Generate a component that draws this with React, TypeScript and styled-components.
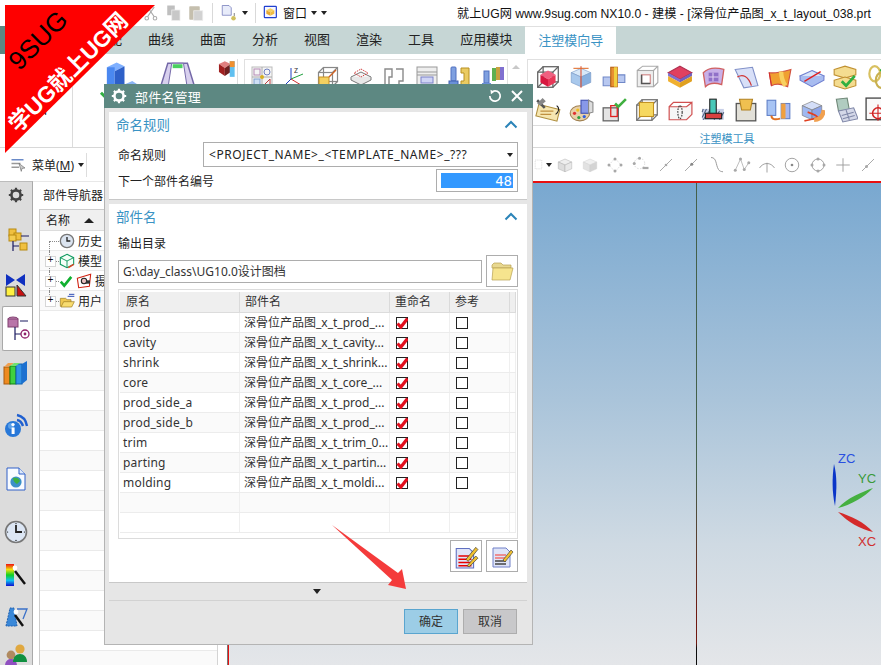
import React from "react";
import styled, { createGlobalStyle } from "styled-components";

const Global = createGlobalStyle`
  html, body { margin: 0; padding: 0; background: #fff; }
  body { font-family: "Noto Sans", "Noto Sans CJK SC", sans-serif; font-size: 12px; color: #222; }
`;

const Page = styled.div`
  position: relative; width: 881px; height: 665px; overflow: hidden;
  display: flex; flex-direction: column; background: #fff;
`;

/* ---------- title bar ---------- */
const TitleBar = styled.div`
  height: 26px; flex: none; display: flex; align-items: center; position: relative; white-space: nowrap;
`;
const QuickTools = styled.div`
  display: flex; align-items: center; height: 26px; width: 457px; padding-left: 143px; box-sizing: border-box; flex: none; gap: 4px;
`;
const QuickSep = styled.span`
  width: 1px; height: 20px; background: #d9d9d9; margin: 0 3px;
`;
const QuickLabel = styled.span`
  font-size: 12px; color: #111;
`;
const Caret = styled.span<{ $c?: string; $s?: number }>`
  width: 0; height: 0; border-left: ${p => (p.$s ?? 7) / 2}px solid transparent; border-right: ${p => (p.$s ?? 7) / 2}px solid transparent;
  border-top: ${p => ((p.$s ?? 7) * 4) / 7}px solid ${p => p.$c || "#222"}; display: inline-block; flex: none;
`;
const TitleText = styled.div`
  font-family: "Liberation Sans", "Noto Sans CJK SC", sans-serif; font-size: 12.2px; color: #111; white-space: nowrap;
`;

/* ---------- tabs ---------- */
const TabBar = styled.div`
  height: 28px; flex: none; display: flex; background: #c6d6d5; padding-left: 31px;
`;
const FileTab = styled.div`
  width: 30px; margin-left: -31px; margin-right: 1px; background: #5d8882;
`;
const Tab = styled.div<{ $on?: boolean }>`
  padding: 0 13px; font-size: 13px; line-height: 27px; white-space: nowrap;
  height: 28px; box-sizing: border-box;
  color: ${p => (p.$on ? "#3a93c4" : "#222")};
  background: ${p => (p.$on ? "#fff" : "transparent")};
  border-top: ${p => (p.$on ? "1px solid #e0e0e0" : "none")};
`;

/* ---------- ribbon ---------- */
const Ribbon = styled.div`
  height: 93px; flex: none; display: flex; background: #fff; border-bottom: 1px solid #d8d8d8; box-sizing: content-box; overflow: hidden;
`;
const RibbonLeft = styled.div<{ $w: number }>`
  width: ${p => p.$w}px; flex: none; height: 89px; margin-top: 5px; border-right: 1px solid #dcdcdc; box-sizing: border-box;
  display: flex; flex-direction: column; align-items: center; justify-content: flex-end; padding-bottom: 30px; font-size: 12px;
`;
const BigIcons = styled.div`
  width: 165px; height: 89px; margin-top: 5px; flex: none; border-right: 1px solid #dcdcdc; box-sizing: border-box; display: flex; padding-left: 26px; gap: 20px; align-items: flex-start;
`;
const Group = styled.div<{ $w: number; $l: number }>`
  width: ${p => p.$w}px; margin-left: ${p => p.$l}px; flex: none; height: 88px; margin-top: 5px; box-sizing: border-box;
  border: 1px solid #e0e0e0; border-bottom: none; display: flex; flex-direction: column;
`;
const IconGrid = styled.div<{ $n: number; $pad: number }>`
  display: grid; grid-template-columns: repeat(${p => p.$n}, 33.1px); grid-auto-rows: 33px; padding-left: ${p => p.$pad}px; flex: none; height: 65px;
`;
const IconCell = styled.div`
  display: flex; align-items: center; justify-content: center;
`;
const GroupLabel = styled.div`
  height: 23px; border-top: 1px solid #dcdcdc; text-align: center; color: #3a93c4; font-size: 11px; line-height: 26px; padding-left: 42px;
`;
const ScrollUp = styled.div`
  width: 0; height: 0; margin: 11px 0 0 4px; border-left: 4px solid transparent; border-right: 4px solid transparent; border-bottom: 4px solid #c8c8c8; flex: none;
`;

/* ---------- selection toolbar ---------- */
const Toolbar = styled.div`
  height: 33px; flex: none; display: flex; align-items: center; background: #fff; position: relative;
`;
const MenuButton = styled.div`
  display: flex; align-items: center; gap: 4px; padding-left: 10px; width: 87px; box-sizing: border-box; border-right: 1px solid #ddd; height: 24px; font-size: 12px; flex: none;
`;
const ToolRun = styled.div`
  margin-left: auto; display: flex; align-items: center; width: 348px; flex: none;
`;
const ToolCell = styled.span`
  width: 25.3px; display: flex; justify-content: center; align-items: center; flex: none;
`;

/* ---------- main area ---------- */
const Main = styled.div`
  flex: 1; display: flex; min-height: 0;
`;
const Rail = styled.div`
  width: 33px; flex: none; background: #dcdcdc; border-right: 1px solid #a9a9a9; box-sizing: border-box; display: flex; flex-direction: column; overflow: hidden; border-top: 1px solid #bcbcbc;
`;
const RailItem = styled.div<{ $h: number; $gap: number; $on?: boolean }>`
  height: ${p => p.$h}px; margin-top: ${p => p.$gap}px; flex: none; display: flex; align-items: center; justify-content: center;
  ${p => p.$on && `background:#fff; border:1px solid #a9a9a9; border-right:none; margin-left:2px; margin-right:-1px; border-radius:2px 0 0 2px; box-sizing:border-box; position:relative;`}
`;
const NavPanel = styled.div`
  width: 195px; flex: none; background: #fff; border-right: 1px solid #777; box-sizing: border-box; padding: 0 9px 0 6px; display: flex; flex-direction: column;
  border-top: 1px solid #e8e8e8;
`;
const NavTitle = styled.div`
  height: 27px; line-height: 27px; padding-left: 4px; font-size: 12px; flex: none;
`;
const NavTable = styled.div`
  flex: 1; border-left: 1px solid #ccc; border-right: 1px solid #d4d4d4; border-top: 1px solid #ccc; overflow: hidden;
`;
const NavHead = styled.div`
  height: 20px; background: #f0f0f0; display: flex; align-items: center; padding-left: 6px; gap: 14px; font-size: 12px; border-bottom: 1px solid #dcdcdc; white-space: nowrap;
`;
const HeadSort = styled.span`
  width: 0; height: 0; border-left: 5px solid transparent; border-right: 5px solid transparent; border-bottom: 5px solid #222;
`;
const NavRow = styled.div<{ $alt: boolean }>`
  height: 19px; border-bottom: 1px solid #eaeaea; background: ${p => (p.$alt ? "#fafafa" : "#fff")};
  display: flex; align-items: center; position: relative; white-space: nowrap; font-size: 12px;
  padding-left: 19px; gap: 3px;
`;
const Guide = styled.span<{ $first?: boolean; $last?: boolean }>`
  position: absolute; left: 9px; top: ${p => (p.$first ? 10 : 0)}px; height: ${p => (p.$first || p.$last ? 10 : 20)}px; width: 9px;
  border-left: 1px dotted #8a8a8a;
  &::after { content: ""; position: absolute; left: 0; right: 0; top: ${p => (p.$first ? 0 : 10)}px; border-top: 1px dotted #8a8a8a; }
`;
const Expander = styled.span`
  position: absolute; left: 5px; top: 5px; width: 9px; height: 9px; border: 1px solid #d6d6d6; background: #fff; font-size: 10px; line-height: 8px; text-align: center; color: #111; font-family: "Liberation Mono", monospace;
`;
const Viewport = styled.div`
  flex: 1; position: relative; border-top: 2px solid #e81010; border-left: 1px solid #e81010; background: linear-gradient(180deg, #79a8d0 0%, #aac4da 45%, #cfdae3 75%, #e4e6e9 100%);
`;
const CentreLine = styled.div`
  position: absolute; left: 467px; top: 0; bottom: 0; width: 1px; background: linear-gradient(180deg, #44604a 0%, #44604a 60%, #701810 90%, #701810 95.5%, #0c0c0c 96.5%);
`;
const Triad = styled.svg`
  position: absolute; left: 594px; top: 263px;
`;
const TriadText = styled.text`
  font-family: "Liberation Sans", sans-serif; font-size: 13px;
`;

/* ---------- dialog ---------- */
const Dialog = styled.div`
  position: absolute; left: 104px; top: 84px; width: 429px; height: 561px; background: #e6e6e6; border: 1px solid #b4b4b4; border-top: none; box-sizing: border-box;
  display: flex; flex-direction: column;
`;
const DialogHead = styled.div`
  height: 24px; flex: none; margin: 0 -1px; background: #5d8882; color: #fff; display: flex; align-items: center; padding: 0 9px 0 7px; font-size: 13px; gap: 8px;
`;
const DialogName = styled.span`
  flex: 1; letter-spacing: 0.2px;
`;
const Panel = styled.div<{ $h: number }>`
  height: ${p => p.$h}px; flex: none; margin: 4px 5px 0 4px; background: #fff; border-bottom: 1px solid #c8c8c8; box-sizing: border-box; padding: 0 9px; position: relative;
`;
const PanelHead = styled.div`
  height: 24px; margin: 0 0 6px -2px; display: flex; align-items: center; justify-content: space-between; color: #3a93c4; font-size: 13.5px;
`;
const FieldRow = styled.div<{ $gap?: number }>`
  display: flex; align-items: center; justify-content: space-between; font-size: 12px; margin-top: ${p => p.$gap ?? 0}px;
`;
const Select = styled.div`
  width: 315px; height: 25px; box-sizing: border-box; border: 1px solid #adadad; display: flex; align-items: center; justify-content: space-between; padding: 0 4px 0 5px; font-size: 12px; letter-spacing: 0.56px; white-space: nowrap;
`;
const NumberBox = styled.div`
  width: 82px; height: 23px; box-sizing: border-box; border: 1px solid #adadad; padding: 3px 4px;
`;
const NumberFill = styled.div`
  height: 100%; background: #3399ff; color: #fff; text-align: right; font-size: 14px; line-height: 16px; font-family: "DejaVu Sans Mono", monospace; font-weight: 300; padding-right: 1px;
`;
const Label = styled.div`
  font-size: 12px; height: 20px; line-height: 20px; margin: 3px 0 6px;
`;
const PathRow = styled.div`
  display: flex; align-items: center; gap: 4px; margin-top: -5px;
`;
const PathInput = styled.div`
  width: 364px; height: 23px; box-sizing: border-box; border: 1px solid #adadad; padding-left: 4px; line-height: 21px; font-size: 12px; color: #333; white-space: nowrap;
`;
const IconButton = styled.div`
  width: 32px; height: 32px; box-sizing: border-box; border: 1px solid #adadad; display: flex; align-items: center; justify-content: center; background: #fff; flex: none;
`;
const Table = styled.div`
  width: 400px; height: 250px; box-sizing: border-box; border: 1px solid #dcdcdc; padding: 2px 1px 1px; margin-top: 2px; overflow: hidden;
`;
const TableRow = styled.div<{ $alt?: boolean; $head?: boolean }>`
  display: grid; grid-template-columns: 120px 150px 60px 60px 1fr; height: ${p => (p.$head ? 21 : 20)}px; box-sizing: border-box;
  background: ${p => (p.$head ? "#efefef" : p.$alt ? "#fafafa" : "#fff")};
  border-bottom: 1px solid ${p => (p.$head ? "#dcdcdc" : "#ececec")};
`;
const Cell = styled.div<{ $head?: boolean; $pad?: number }>`
  border-right: 1px solid ${p => (p.$head ? "#dadada" : "#efefef")};
  padding-left: ${p => p.$pad ?? 4}px; line-height: 18px; font-size: 12px; white-space: nowrap; overflow: hidden; color: #333; display: flex; align-items: center;
`;
const OrigName = styled.span`
  letter-spacing: 0.2px;
`;
const Box = styled.span`
  width: 12px; height: 12px; box-sizing: border-box; border: 1px solid #222; display: block; background: #fff; flex: none; position: relative;
`;
const CheckMark = styled.svg`
  position: absolute; left: -1px; top: -1px;
`;
const ActionRow = styled.div`
  display: flex; justify-content: flex-end; gap: 4px; margin-top: 1px;
`;
const MoreBar = styled.div`
  height: 17px; flex: none; margin: 0 5px 0 4px; display: flex; justify-content: center; align-items: center; border-bottom: 1px solid #d2d2d2; padding-right: 2px;
`;
const DialogFoot = styled.div`
  display: flex; justify-content: flex-end; gap: 5px; padding: 8px 15px 0 0;
`;
const FootButton = styled.div<{ $primary?: boolean }>`
  width: 54px; height: 25px; box-sizing: border-box; text-align: center; line-height: 23px; font-size: 12px; color: #333;
  border: 1px solid ${p => (p.$primary ? "#5aa5cf" : "#adadad")};
  background: ${p => (p.$primary ? "#9ccde6" : "#c8c8ca")};
`;

/* ---------- overlays ---------- */
const Ribbonette = styled.div`
  position: absolute; left: 5px; top: 5px; width: 150px; height: 148px; background: #fe0000; clip-path: polygon(0 0, 100% 0, 0 100%);
`;
const Stamp = styled.div<{ $x: number; $y: number; $c: string; $s: number; $b?: boolean }>`
  position: absolute; left: ${p => p.$x}px; top: ${p => p.$y}px; color: ${p => p.$c}; font-size: ${p => p.$s}px; font-weight: ${p => (p.$b ? 700 : 400)};
  font-family: "Liberation Sans", "Noto Sans CJK SC", sans-serif; transform: translate(-50%, -50%) rotate(-45deg); white-space: nowrap; line-height: 1;
`;
const Pointer = styled.svg`
  position: absolute; left: 325px; top: 520px; pointer-events: none;
`;

/* ---------- icons ---------- */
type BoxProps = { t: string; l: string; r: string; s?: string };
const Iso = ({ t, l, r, s = "#7a7a7a" }: BoxProps) => (
  <g stroke={s} strokeWidth="0.6" strokeLinejoin="round">
    <polygon points="12,4 21,8 12,12 3,8" fill={t} />
    <polygon points="3,8 12,12 12,21 3,17" fill={l} />
    <polygon points="21,8 12,12 12,21 21,17" fill={r} />
  </g>
);
const Wire = ({ c = "#666" }: { c?: string }) => (
  <g fill="none" stroke={c} strokeWidth="1.2">
    <rect x="2.5" y="7.5" width="14" height="14" />
    <rect x="7.5" y="2.5" width="14" height="14" />
    <path d="M2.5 7.5l5-5M16.5 7.5l5-5M16.5 21.5l5-5M2.5 21.5l5-5" />
  </g>
);
const S = ({ children, w = 24 }: { children: React.ReactNode; w?: number }) => (
  <svg width={w} height={w} viewBox="0 0 24 24">{children}</svg>
);

const ribbonA: React.ReactNode[] = [
  <S><rect x="2" y="2" width="20" height="20" fill="#f5f5f5" stroke="#bbb" /><rect x="4" y="4" width="6" height="6" fill="none" stroke="#b58ab5" /><circle cx="17" cy="7" r="3" fill="none" stroke="#7080c0" /><rect x="4" y="14" width="6" height="6" fill="#cfe0f5" stroke="#80a0d0" /><path d="M14 20l6-6v6z" fill="none" stroke="#c04040" /><path d="M2 12h20M12 2v20" stroke="#aaa" /><circle cx="12" cy="12" r="2" fill="#d8b020" /></S>,
  <S><path d="M8 3v11l-5 5" stroke="#2040c0" fill="none" /><path d="M8 14l12-5" stroke="#20a040" fill="none" /><path d="M8 14l10 6" stroke="#d03030" fill="none" /><text x="11" y="8" fontSize="7" fill="#333">Z</text></S>,
  <S><Wire c="#888" /><rect x="3" y="12" width="10" height="9" fill="#f4d060" stroke="#c89020" /><path d="M13 12l7-7" stroke="#d06020" strokeWidth="1.5" /></S>,
  <S><polygon points="12,7 22,12 12,17 2,12" fill="#f5f5f5" stroke="#777" /><path d="M2 12v3l10 5 10-5v-3" fill="#e8e8e8" stroke="#777" /><polygon points="12,4 19,8 12,12 5,8" fill="none" stroke="#d04040" strokeDasharray="1.5 1" /></S>,
  <S><path d="M3 4h7v8h-3v9h-4zM14 4h7v12h-4v5h-3" fill="#fff" stroke="#8a8a8a" strokeWidth="1.4" /></S>,
  <S><rect x="2" y="2" width="20" height="20" fill="#eee" stroke="#999" /><path d="M2 7h20M2 10h20" stroke="#999" /><rect x="6" y="12" width="12" height="6" fill="#cfd4f5" stroke="#7a80c8" /></S>,
  <S><rect x="3" y="2" width="5" height="14" rx="1" fill="#7fa0e0" stroke="#5070c0" /><rect x="1" y="16" width="9" height="5" fill="#6a90d8" stroke="#4060b0" /><path d="M13 3h8v18h-8v-5h3v-8h-3z" fill="#eacb62" stroke="#b89020" /></S>,
  <S><rect x="3" y="6" width="5" height="12" fill="#7fa0e0" stroke="#5070c0" /><rect x="1" y="18" width="9" height="4" fill="#6a90d8" /><rect x="11" y="3" width="4" height="13" fill="#5fb050" /><rect x="15" y="2" width="4" height="13" fill="#c8a040" /><rect x="19" y="2" width="4" height="13" fill="#8070d0" /></S>,
];
const ribbonB: React.ReactNode[] = [
  <S w={26}><Wire /><polygon points="12,6 19,10 12,14 5,10" fill="#f06080" /><polygon points="5,10 12,14 12,21 5,17" fill="#d81840" /><polygon points="19,10 12,14 12,21 19,17" fill="#e83858" /></S>,
  <S w={26}><Iso t="#d8e8f8" l="#a8c8ec" r="#88b0e0" s="#7a9ac8" /><path d="M12 2v20" stroke="#e05030" /><path d="M5 4h14" stroke="#e07030" /></S>,
  <S w={26}><polygon points="2,12 9,12 9,20 2,20" fill="#b8c8f0" stroke="#7088c8" /><polygon points="15,10 22,10 22,17 15,17" fill="#b8c8f0" stroke="#7088c8" /><rect x="9" y="3" width="6" height="18" fill="#e89030" stroke="#b86010" /><rect x="12" y="3" width="3" height="18" fill="#f0d040" /></S>,
  <S w={26}><rect x="3" y="6" width="15" height="15" fill="#eee" stroke="#aaa" /><path d="M3 6l5-4h14v15l-4 4M18 6l4-4" fill="none" stroke="#aaa" /><rect x="7" y="10" width="8" height="8" fill="#fff" stroke="#d08080" /><path d="M7 10v8h8" fill="none" stroke="#555" strokeWidth="1.4" /></S>,
  <S w={26}><polygon points="12,2 23,8 12,14 1,8" fill="#e04060" stroke="#b03050" /><polygon points="1,8 12,14 12,17 1,11" fill="#8070d0" /><polygon points="23,8 12,14 12,17 23,11" fill="#7060c0" /><polygon points="1,11 12,17 12,22 1,16" fill="#f0b030" /><polygon points="23,11 12,17 12,22 23,16" fill="#e0a020" /></S>,
  <S w={26}><path d="M3 8c5-5 12-5 19-3l-2 14c-6-2-11-2-15 2z" fill="#c8b0e8" stroke="#d06060" strokeWidth="1.2" /><rect x="8" y="8" width="9" height="8" fill="#9070c8" /><path d="M12 8v8M8 12h9" stroke="#e0d0f0" /></S>,
  <S w={26}><polygon points="2,5 18,3 23,20 10,22" fill="#d8e0f8" stroke="#8090c8" /><path d="M4 12c5-3 10-1 13 8" fill="none" stroke="#d03838" strokeWidth="1.2" /></S>,
  <S w={26}><path d="M3 8c6 1 13-1 20-3l-3 16c-6-3-11-3-15-1z" fill="#f0a030" stroke="#d05040" /><path d="M3 8l2 12" stroke="#d03030" /><path d="M14 7c0 5 1 9 4 13" stroke="#f8d060" strokeWidth="4" fill="none" /></S>,
  <S w={26}><polygon points="12,6 23,11 12,17 1,11" fill="#d8e4fa" stroke="#7080d0" /><path d="M1 11v4l11 6 11-6v-4" fill="#a8bcf0" stroke="#7080d0" /><path d="M5 16l15-9" stroke="#e02020" strokeWidth="1.2" /></S>,
  <S w={26}><path d="M2 5l10-3 10 3v5l-10 3-10-3z" fill="#f4dc90" stroke="#c09030" /><path d="M2 15l10-3 10 3v5l-10 3-10-3z" fill="#f4dc90" stroke="#c09030" /><path d="M9 16l4 4 8-9" fill="none" stroke="#30b040" strokeWidth="2.6" /></S>,
  <S w={26}><ellipse cx="9" cy="9" rx="5" ry="7" fill="none" stroke="#d8c060" strokeWidth="2" /><ellipse cx="15" cy="15" rx="5" ry="7" fill="none" stroke="#c8b050" strokeWidth="2" /><path d="M14 5l4 4 6-7" fill="none" stroke="#30b040" strokeWidth="2" /></S>,
  <S w={26}><rect x="2" y="9" width="20" height="11" transform="rotate(14 12 14)" fill="#f6e6b0" stroke="#b09040" /><path d="M5 13h12M5 16h10" stroke="#c09040" /><path d="M2 3l7 7" stroke="#555" strokeWidth="2.4" /><path d="M2 6l5-5 3 3-5 4z" fill="#888" /><path d="M20 8c3 2 2 6-1 8" fill="none" stroke="#222" /></S>,
  <S w={26}><ellipse cx="11" cy="15" rx="9" ry="7" fill="#e8d0a8" stroke="#a08050" /><circle cx="6" cy="15" r="1.5" fill="#e03030" /><circle cx="10" cy="19" r="1.5" fill="#30a040" /><circle cx="15" cy="18" r="1.5" fill="#3060e0" /><circle cx="9" cy="12" r="1.5" fill="#f0c020" /><rect x="12" y="3" width="7" height="12" fill="#8898e8" stroke="#4050b0" /><polygon points="19,3 23,5 23,14 19,15" fill="#ddd" stroke="#888" /></S>,
  <S w={26}><rect x="2" y="10" width="14" height="12" fill="#e4e4e4" stroke="#666" strokeWidth="1.2" /><rect x="9" y="8" width="6" height="10" fill="none" stroke="#e02020" strokeWidth="1.2" /><path d="M13 6l3 3 7-7" fill="none" stroke="#40b040" strokeWidth="2.4" /></S>,
  <S w={26}><Wire c="#777" /><rect x="5" y="5" width="13" height="13" fill="#f6d860" stroke="#c09020" /></S>,
  <S w={26}><path d="M2 9h16l5-4v11l-5 5H2z" fill="#f6f6f6" stroke="#d05050" strokeWidth="1.1" /><path d="M2 9l4-4h17" fill="none" stroke="#d05050" strokeWidth="1.1" /><ellipse cx="12" cy="14" rx="2" ry="6" fill="none" stroke="#333" strokeDasharray="1.5 1" /></S>,
  <S w={26}><rect x="2" y="11" width="20" height="10" fill="#c8d0e8" /><path d="M3 11l-1 3M6 11l-4 8M10 11l-7 10M18 13l-5 8M22 14l-4 7" stroke="#506080" /><rect x="9" y="2" width="6" height="14" fill="#48c8b8" stroke="#222" /><rect x="5" y="15" width="15" height="5" fill="#d84040" stroke="#222" /></S>,
  <S w={26}><rect x="3" y="6" width="18" height="16" fill="#e2e0d8" stroke="#555" strokeWidth="1.2" /><polygon points="6,2 18,2 16,12 8,12" fill="#f0c050" stroke="#b08020" /></S>,
  <S w={26}><rect x="1" y="3" width="8" height="14" fill="#a8c4f4" stroke="#6080c8" /><rect x="14" y="6" width="8" height="14" fill="#a8b8f0" stroke="#6080c8" /><rect x="14" y="6" width="4" height="14" fill="#f0a040" /><path d="M5 17c0 4 4 4 8 3" fill="none" stroke="#e07020" strokeWidth="1.8" /></S>,
  <S w={26}><Iso t="#d4def8" l="#a0b8f0" r="#8ca4e8" /><path d="M8 14c3 1 9 3 9 5-4 2-8 2-12 3" stroke="#e04020" fill="none" strokeWidth="1.6" /><path d="M14 21c5 0 8-3 9-9" stroke="#f0a050" strokeWidth="4" fill="none" /></S>,
  <S w={26}><polygon points="4,2 14,1 16,12 6,13" fill="#b0ccc0" stroke="#708878" /><polygon points="6,13 20,10 24,20 10,23" fill="#d4d8e8" stroke="#8088a8" /><path d="M9 17l11-3M10 20l11-3M13 12l3 9" stroke="#8088a8" /></S>,
  <S w={26}><rect x="1" y="1" width="20" height="20" fill="#fafafa" stroke="#444" strokeWidth="1.2" /><circle cx="12" cy="15" r="5" fill="none" stroke="#d02020" strokeWidth="1.4" /><path d="M12 7v15M4 15h18" stroke="#d02020" /></S>,
];

const toolGlyph = (k: number) => {
  const g = "#a8a8a8";
  const list: React.ReactNode[] = [
    <S w={18}><Iso t="#eee" l="#ddd" r="#e8e8e8" s="#aaa" /></S>,
    <S w={18}><Iso t="#f0f0f0" l="#e2e2e2" r="#d4d4d4" s="#cfcfcf" /></S>,
    <S w={18}><path d="M12 3l8 9-8 9-8-9z" fill="none" stroke="#ccc" strokeDasharray="2 2" /><circle cx="12" cy="4" r="2" fill={g} /><circle cx="12" cy="20" r="2" fill={g} /><circle cx="4" cy="12" r="2" fill={g} /><circle cx="20" cy="12" r="2" fill={g} /></S>,
    <S w={18}><circle cx="10" cy="10" r="7" fill="none" stroke="#ccc" strokeDasharray="2 2" /><circle cx="10" cy="3" r="2" fill={g} /><circle cx="3" cy="10" r="2" fill={g} /><path d="M14 16h8" stroke={g} strokeWidth="3" /></S>,
    <S w={18}><path d="M4 20L20 4" stroke={g} strokeWidth="1.3" /><circle cx="12" cy="12" r="1.8" fill={g} /></S>,
    <S w={18}><path d="M4 20L20 4" stroke={g} strokeWidth="1.3" /><circle cx="13" cy="11" r="2" fill="#888" /></S>,
    <S w={18}><path d="M4 2c8 0 6 10 10 16 1 2 4 3 6 3" fill="none" stroke="#999" strokeWidth="1.3" /></S>,
    <S w={18}><path d="M3 19L10 4l5 14 6-9" fill="none" stroke={g} /><circle cx="10" cy="4" r="2" fill={g} /><circle cx="3" cy="19" r="2" fill={g} /><circle cx="15" cy="18" r="2" fill={g} /><circle cx="21" cy="9" r="2" fill={g} /></S>,
    <S w={18}><path d="M2 16c5-8 15-8 20 0M12 9v13" fill="none" stroke="#999" strokeWidth="1.2" /></S>,
    <S w={18}><circle cx="12" cy="12" r="9" fill="none" stroke="#999" strokeWidth="1.2" /><circle cx="12" cy="12" r="1.8" fill="#888" /></S>,
    <S w={18}><circle cx="12" cy="12" r="8" fill="none" stroke="#999" strokeWidth="1.2" /><circle cx="12" cy="4" r="2" fill={g} /><circle cx="4" cy="12" r="2" fill={g} /><circle cx="20" cy="12" r="2" fill={g} /><circle cx="12" cy="20" r="2" fill={g} /></S>,
    <S w={18}><path d="M12 3v18M3 12h18" stroke="#999" strokeWidth="1.2" /></S>,
    <S w={18}><path d="M4 20L20 4" stroke={g} strokeWidth="1.3" /><circle cx="10" cy="14" r="2" fill={g} /></S>,
  ];
  return list[k];
};

const PartCheck = () => (
  <CheckMark width="12" height="12" viewBox="0 0 12 12">
    <path d="M1.5 6.5l3.4 3.6L11.5 1.6" fill="none" stroke="#e3101e" strokeWidth="3.2" />
  </CheckMark>
);

const parts: [string, string][] = [
  ["prod", "深骨位产品图_x_t_prod_..."],
  ["cavity", "深骨位产品图_x_t_cavity..."],
  ["shrink", "深骨位产品图_x_t_shrink..."],
  ["core", "深骨位产品图_x_t_core_..."],
  ["prod_side_a", "深骨位产品图_x_t_prod_..."],
  ["prod_side_b", "深骨位产品图_x_t_prod_..."],
  ["trim", "深骨位产品图_x_t_trim_0..."],
  ["parting", "深骨位产品图_x_t_partin..."],
  ["molding", "深骨位产品图_x_t_moldi..."],
];

const Chevron = () => (
  <svg width="14" height="9" viewBox="0 0 14 9"><path d="M1.5 7.5L7 2l5.5 5.5" fill="none" stroke="#2b84b8" strokeWidth="2" /></svg>
);

const Gear = ({ c = "#fff", s = 16 }: { c?: string; s?: number }) => (
  <svg width={s} height={s} viewBox="0 0 16 16">
    <circle cx="8" cy="8" r="4.6" fill="none" stroke={c} strokeWidth="2.6" />
    <path d="M8 0.8v2.6M8 12.6v2.6M0.8 8h2.6M12.6 8h2.6M2.9 2.9l1.8 1.8M11.3 11.3l1.8 1.8M13.1 2.9l-1.8 1.8M4.7 11.3l-1.8 1.8" stroke={c} strokeWidth="2.2" />
  </svg>
);

const Folder = ({ s = 24 }: { s?: number }) => (
  <svg width={s} height={s} viewBox="0 0 24 24">
    <path d="M2 6l2-2h7l2 2h8v3H2z" fill="#e8d890" stroke="#b8a050" strokeWidth="0.7" />
    <path d="M3 9h20l-3 12H2z" fill="#f6e48e" stroke="#b8a050" strokeWidth="0.7" />
  </svg>
);

const railIcons: React.ReactNode[] = [
  <Gear c="#444" s={16} />,
  <svg width="30" height="30" viewBox="0 0 30 30"><rect x="8" y="3" width="7" height="7" fill="#f0c040" stroke="#b88a10" /><rect x="13" y="7" width="7" height="7" fill="#f0c040" stroke="#b88a10" /><rect x="8" y="9" width="7" height="6" fill="#f4cc50" stroke="#b88a10" /><path d="M12 15v10M12 20h6M20 10h8" stroke="#1a1a60" strokeWidth="1.2" /><rect x="19" y="17" width="7" height="7" fill="#f0c040" stroke="#b88a10" /></svg>,
  <svg width="24" height="26" viewBox="0 0 24 26"><path d="M2 1l9 6-9 6zM21 1l-9 6 9 6z" fill="#1030c0" /><rect x="2" y="14" width="9" height="9" fill="#fff040" stroke="#333" /><path d="M13 12v11h9z" fill="#c81010" stroke="#333" /></svg>,
  <svg width="24" height="30" viewBox="0 0 24 30"><ellipse cx="7" cy="5" rx="5" ry="2" fill="#c88ab8" stroke="#804070" /><rect x="2" y="5" width="10" height="8" fill="#b874a8" stroke="#804070" /><path d="M9 13v13M9 20h6M14 7h8" stroke="#1a1a60" strokeWidth="1.2" /><circle cx="19" cy="20" r="4" fill="none" stroke="#90206a" strokeWidth="1.3" /><circle cx="19" cy="20" r="1.4" fill="#90206a" /></svg>,
  <svg width="26" height="26" viewBox="0 0 26 26"><rect x="1" y="7" width="6" height="17" fill="#ee8a20" stroke="#a85a10" /><rect x="7" y="6" width="6" height="18" fill="#40d040" stroke="#108010" /><rect x="13" y="4" width="6" height="20" fill="#3090e8" stroke="#1060b0" /><polygon points="19,4 24,1 24,20 19,24" fill="#1c70d0" /><path d="M1 7l4-4h6l-4 3" fill="#f0a050" /><path d="M7 6l4-3h6l-4 3" fill="#70e070" /></svg>,
  <svg width="26" height="26" viewBox="0 0 26 26"><path d="M14 2c5 1 9 5 10 11M14 7c3 .5 5 3 6 6" fill="none" stroke="#2060d0" strokeWidth="2.4" /><circle cx="10" cy="16" r="8" fill="#2878d8" /><circle cx="8" cy="13" r="3" fill="#70b0f0" opacity=".7" /><rect x="8.6" y="14.5" width="3" height="6.5" fill="#fff" /><circle cx="10" cy="11.6" r="1.7" fill="#fff" /></svg>,
  <svg width="22" height="26" viewBox="0 0 22 26"><path d="M2 2h12l6 6v16H2z" fill="#f8fbff" stroke="#3060c8" /><path d="M14 2v6h6" fill="#dce8fa" stroke="#3060c8" /><circle cx="11" cy="16" r="5.6" fill="#3a90c8" /><path d="M8 12c3-1 6 0 7 3l-3 3c-2-1-4-3-4-6z" fill="#3cb040" /></svg>,
  <svg width="24" height="24" viewBox="0 0 24 24"><circle cx="12" cy="12" r="10.5" fill="#dce6f4" stroke="#777" strokeWidth="1.6" /><path d="M12 5v7h6" fill="none" stroke="#222" strokeWidth="1.8" /><circle cx="12" cy="3.6" r=".6" /><circle cx="12" cy="20.4" r=".6" /><circle cx="3.6" cy="12" r=".6" /><circle cx="20.4" cy="12" r=".6" /></svg>,
  <svg width="22" height="24" viewBox="0 0 22 24"><defs><linearGradient id="rb" x1="0" y1="0" x2="0" y2="1"><stop offset="0" stopColor="#f01010" /><stop offset=".25" stopColor="#f0e010" /><stop offset=".5" stopColor="#10d020" /><stop offset=".75" stopColor="#10c0f0" /><stop offset="1" stopColor="#1010d0" /></linearGradient></defs><rect x="1" y="1" width="8" height="22" fill="url(#rb)" /><path d="M10 8l10 13" stroke="#111" strokeWidth="2.4" /><circle cx="10" cy="5" r="2.4" fill="#fff" /></svg>,
  <svg width="24" height="24" viewBox="0 0 24 24"><path d="M2 20L6 2h4l3 18z" fill="#3a88d8" stroke="#2060b0" strokeDasharray="2 1" /><path d="M13 3h10l-4 10" fill="none" stroke="#3a70c8" strokeWidth="1.3" /><path d="M11 9l8 11" stroke="#111" strokeWidth="2.4" /><circle cx="12" cy="6" r="2.4" fill="#fff" /></svg>,
  <svg width="24" height="28" viewBox="0 0 24 28"><circle cx="7" cy="13" r="4.4" fill="#b08a60" /><path d="M1 24c0-5 3-7 6-7s6 2 6 7v4H1z" fill="#9050c0" /><circle cx="16" cy="7" r="4.6" fill="#e0a840" /><path d="M9 20c0-5 3-8 7-8s7 3 7 8z" fill="#109040" /></svg>,
];
const railGaps: [number, number][] = [[25, 0], [36, 16], [36, 9], [45, 2], [36, 4], [36, 17], [36, 17], [36, 17], [36, 7], [36, 7], [36, 2]];

const navItems: { e: boolean; ic: React.ReactNode; t: string }[] = [
  { e: false, ic: <S w={16}><circle cx="12" cy="12" r="10" fill="#dbe4f0" stroke="#777" strokeWidth="2" /><path d="M12 6v6h5" fill="none" stroke="#222" strokeWidth="2" /></S>, t: "历史" },
  { e: true, ic: <S w={16}><polygon points="12,2 22,7 22,17 12,22 2,17 2,7" fill="#f4fff8" stroke="#109a60" strokeWidth="1.6" /><path d="M2 7l10 5 10-5M12 12v10" fill="none" stroke="#109a60" strokeWidth="1.4" /><path d="M14 22l8-5" stroke="#e04020" strokeWidth="2" /></S>, t: "模型" },
  { e: true, ic: <><S w={14}><path d="M3 13l6 7L21 5" fill="none" stroke="#10b030" strokeWidth="4.5" /></S><S w={16}><polygon points="2,8 22,2 20,20 4,22" fill="#fff" stroke="#d02010" strokeWidth="1.6" /><circle cx="12" cy="12" r="4" fill="#e8c0c0" stroke="#222" strokeWidth="1.6" /><rect x="15" y="11" width="6" height="5" fill="#333" /></S></>, t: "摄" },
  { e: true, ic: <S w={16}><path d="M2 20V8h8l2 2h6v10z" fill="#f0c850" stroke="#9a7a20" /><path d="M3 21l4-8h16l-4 8z" fill="#f8dc70" stroke="#9a7a20" /><path d="M15 2h8M13 5h10" stroke="#2040b0" strokeWidth="1.4" /></S>, t: "用户" },
];

export default function App() {
  return (
    <Page>
      <Global />
      <TitleBar>
        <QuickTools>
          <S w={18}><path d="M6 4l9 13M15 4L6 17" stroke="#aaa" strokeWidth="1.6" /><circle cx="5" cy="19" r="2.4" fill="none" stroke="#aaa" strokeWidth="1.4" /><circle cx="16" cy="19" r="2.4" fill="none" stroke="#aaa" strokeWidth="1.4" /></S>
          <S w={18}><rect x="3" y="2" width="10" height="13" fill="#bfbfbf" /><rect x="9" y="8" width="11" height="14" fill="#c8c8c8" stroke="#eee" /></S>
          <S w={18}><rect x="3" y="3" width="14" height="18" rx="1" fill="#c5bfae" /><rect x="9" y="9" width="12" height="13" fill="#d2d2d2" stroke="#eee" /></S>
          <QuickSep />
          <S w={18}><path d="M3 2h9l3 3v10H3z" fill="#e8ecfa" stroke="#7078b8" /><circle cx="18" cy="19" r="3" fill="#d0c060" /><path d="M19 12v4" stroke="#555" /></S>
          <Caret />
          <QuickSep />
          <S w={16}><rect x="2" y="2" width="18" height="17" rx="1" fill="#f7f7ff" stroke="#2040d0" strokeWidth="1.8" /><polygon points="11,5 17,8 11,11 5,8" fill="#f4d060" /><polygon points="5,8 11,11 11,16 5,13" fill="#e8a830" /><polygon points="17,8 11,11 11,16 17,13" fill="#f0bc40" /></S>
          <QuickLabel>窗口</QuickLabel>
          <Caret />
          <Caret />
        </QuickTools>
        <TitleText>就上UG网 www.9sug.com NX10.0 - 建模 - [深骨位产品图_x_t_layout_038.prt</TitleText>
      </TitleBar>

      <TabBar>
        <FileTab />
        <Tab>主页</Tab>
        <Tab>装配</Tab>
        <Tab>曲线</Tab>
        <Tab>曲面</Tab>
        <Tab>分析</Tab>
        <Tab>视图</Tab>
        <Tab>渲染</Tab>
        <Tab>工具</Tab>
        <Tab>应用模块</Tab>
        <Tab $on>注塑模向导</Tab>
      </TabBar>

      <Ribbon>
        <RibbonLeft $w={73}>项目</RibbonLeft>
        <BigIcons>
          <svg width="40" height="46" viewBox="0 0 40 46"><polygon points="8,8 18,3 26,7 16,12" fill="#7fb0ff" /><rect x="8" y="8" width="8" height="24" fill="#4a88f0" /><polygon points="16,12 26,7 26,26 16,32" fill="#2e60c8" /><polygon points="20,28 34,22 40,26 26,33" fill="#8ab4f4" /><polygon points="26,33 40,26 40,34 26,42" fill="#3a70d8" /><path d="M2 34l6 6 10-11" fill="none" stroke="#30b040" strokeWidth="3" /></svg>
          <svg width="40" height="34" viewBox="0 0 40 34"><polygon points="10,4 30,4 38,30 2,30" fill="#d8d0ee" stroke="#7468a8" strokeWidth="1.5" /><polygon points="14,4 26,4 30,30 10,30" fill="#fff" stroke="#7468a8" /><rect x="15" y="5" width="10" height="4" fill="#4ad060" /></svg>
          <svg width="20" height="22" viewBox="0 0 20 22"><polygon points="2,5 8,2 14,5 8,9" fill="#e08080" /><polygon points="2,5 8,9 8,17 2,13" fill="#a02020" /><polygon points="14,5 8,9 8,17 14,13" fill="#702020" /><rect x="13" y="2" width="5" height="16" fill="#60c0f0" /><rect x="13" y="2" width="5" height="6" fill="#f09030" /></svg>
        </BigIcons>
        <Group $w={264} $l={6}>
          <IconGrid $n={8} $pad={0}>
            {ribbonA.map((n, i) => <IconCell key={i}>{n}</IconCell>)}
          </IconGrid>
        </Group>
        <ScrollUp />
        <Group $w={358} $l={7}>
          <IconGrid $n={11} $pad={3}>
            {ribbonB.map((n, i) => <IconCell key={i}>{n}</IconCell>)}
          </IconGrid>
          <GroupLabel>注塑模工具</GroupLabel>
        </Group>
      </Ribbon>

      <Toolbar>
        <MenuButton>
          <S w={18}><rect x="2" y="4" width="16" height="2" fill="#6a8ac8" /><rect x="2" y="9" width="12" height="2" fill="#999" /><rect x="2" y="14" width="10" height="2" fill="#999" /><path d="M12 10l8 6-4 .5-1 4z" fill="#ccc" stroke="#555" strokeWidth=".7" /></S>
          <span>菜单(<u>M</u>)</span>
          <Caret />
        </MenuButton>
        <ToolRun>
          <S w={14}><rect x="4" y="3" width="12" height="16" fill="none" stroke="#bbb" strokeDasharray="2 2" /></S>
          <Caret />
          {Array.from({ length: 13 }).map((_, i) => <ToolCell key={i}>{toolGlyph(i)}</ToolCell>)}
        </ToolRun>
      </Toolbar>

      <Main>
        <Rail>
          {railIcons.map((n, i) => (
            <RailItem key={i} $h={railGaps[i][0]} $gap={railGaps[i][1]} $on={i === 3}>{n}</RailItem>
          ))}
        </Rail>
        <NavPanel>
          <NavTitle>部件导航器</NavTitle>
          <NavTable>
            <NavHead><span>名称</span><HeadSort /></NavHead>
            {Array.from({ length: 22 }).map((_, i) => {
              const r = navItems[i];
              return (
                <NavRow key={i} $alt={i % 2 === 1}>
                  {r && <Guide $first={i === 0} $last={i === navItems.length - 1} />}
                  {r?.e && <Expander>+</Expander>}
                  {r?.ic}
                  {r && <span>{r.t}</span>}
                </NavRow>
              );
            })}
          </NavTable>
        </NavPanel>
        <Viewport>
          <CentreLine />
          <Triad width="60" height="105" viewBox="0 0 60 105">
            <path d="M11 18c3 12 3 24 1 42-3-14-3-28-1-42z" fill="#0a35c8" />
            <path d="M15 62c9-10 24-16 35-20-8 9-23 17-35 20z" fill="#45b040" />
            <path d="M15 66c13 4 26 10 35 20-13-3-25-10-35-20z" fill="#d42a2a" />
            <TriadText x="15" y="17" fill="#2a50e0">ZC</TriadText>
            <TriadText x="35" y="37" fill="#3a9a3a">YC</TriadText>
            <TriadText x="35" y="100" fill="#d03030">XC</TriadText>
          </Triad>
        </Viewport>
      </Main>

      <Dialog>
        <DialogHead>
          <Gear />
          <DialogName>部件名管理</DialogName>
          <svg width="14" height="14" viewBox="0 0 14 14"><path d="M5 2.2A5.2 5.2 0 1 1 1.8 7" fill="none" stroke="#fff" strokeWidth="1.7" /><path d="M2.5 0.8l.4 4.4 3.6-2.4z" fill="#fff" /></svg>
          <svg width="14" height="14" viewBox="0 0 14 14"><path d="M2 2l10 10M12 2L2 12" stroke="#fff" strokeWidth="2" /></svg>
        </DialogHead>
        <Panel $h={88}>
          <PanelHead>命名规则<Chevron /></PanelHead>
          <FieldRow>
            <span>命名规则</span>
            <Select>&lt;PROJECT_NAME&gt;_&lt;TEMPLATE_NAME&gt;_???<Caret /></Select>
          </FieldRow>
          <FieldRow $gap={2}>
            <span>下一个部件名编号</span>
            <NumberBox><NumberFill>48</NumberFill></NumberBox>
          </FieldRow>
        </Panel>
        <Panel $h={379}>
          <PanelHead>部件名<Chevron /></PanelHead>
          <Label>输出目录</Label>
          <PathRow>
            <PathInput>G:\day_class\UG10.0设计图档</PathInput>
            <IconButton><Folder /></IconButton>
          </PathRow>
          <Table>
            <TableRow $head>
              <Cell $head $pad={6}>原名</Cell>
              <Cell $head $pad={5}>部件名</Cell>
              <Cell $head $pad={5}>重命名</Cell>
              <Cell $head $pad={5}>参考</Cell>
              <Cell $head />
            </TableRow>
            {Array.from({ length: 11 }).map((_, i) => {
              const p = parts[i];
              return (
                <TableRow key={i} $alt={i % 2 === 1}>
                  <Cell $pad={3}>{p && <OrigName>{p[0]}</OrigName>}</Cell>
                  <Cell>{p?.[1]}</Cell>
                  <Cell $pad={6}>{p && <Box><PartCheck /></Box>}</Cell>
                  <Cell $pad={6}>{p && <Box />}</Cell>
                  <Cell />
                </TableRow>
              );
            })}
          </Table>
          <ActionRow>
            <IconButton>
              <S w={26}><path d="M3 5h12l4 4v14H3z" fill="#dfe4f8" stroke="#6070c0" /><path d="M5 12h12M5 15h12M5 18h12M5 21h12" stroke="#e80000" strokeWidth="1.6" /><path d="M12 15l9-11 2 2-9 11z" fill="#f0c030" stroke="#333" strokeWidth=".6" /><path d="M13 21l8-9 2 2-8 8z" fill="#f0c030" stroke="#333" strokeWidth=".6" /></S>
            </IconButton>
            <IconButton>
              <S w={24}><path d="M3 4h13l4 4v15H3z" fill="#dfe4f8" stroke="#7080c8" /><path d="M5 11h11M5 14h11" stroke="#f07070" strokeWidth="1.6" /><path d="M5 17h11M5 20h11" stroke="#444" strokeWidth="1.4" /><path d="M13 16l8-10 2 2-8 10z" fill="#f0c030" stroke="#333" strokeWidth=".6" /></S>
            </IconButton>
          </ActionRow>
        </Panel>
        <MoreBar><Caret $s={9} /></MoreBar>
        <DialogFoot>
          <FootButton $primary>确定</FootButton>
          <FootButton>取消</FootButton>
        </DialogFoot>
      </Dialog>

      <Pointer width="90" height="76" viewBox="0 0 90 76">
        <polygon points="7,5 73,53 77,49 81,69 63,65 67,60" fill="#f43b3b" />
      </Pointer>

      <Ribbonette />
      <Stamp $x={38} $y={40} $c="#000" $s={26}>9SUG</Stamp>
      <Stamp $x={69} $y={73} $c="#fff" $s={22.5} $b>学UG就上UG网</Stamp>
    </Page>
  );
}
